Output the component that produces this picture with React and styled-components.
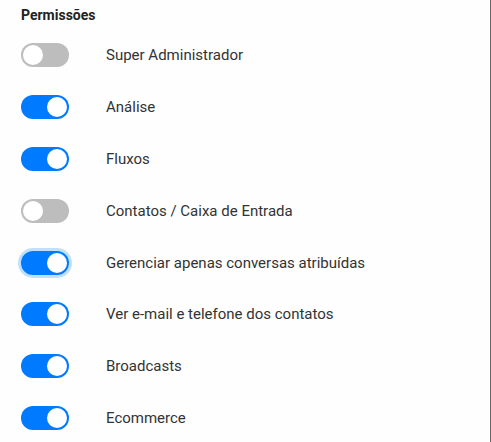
import React from "react";
import styled, { createGlobalStyle } from "styled-components";

const Global = createGlobalStyle`
  html, body { margin: 0; padding: 0; background: #fff; }
  * { box-sizing: border-box; }
`;

const Panel = styled.div`
  width: 491px;
  height: 442px;
  border-right: 1px solid #666;
  background: #fefefe;
  padding: 6px 0 0 21px;
  font-family: Roboto, "Liberation Sans", sans-serif;
  overflow: hidden;
`;

const Title = styled.div`
  font-size: 14px;
  font-weight: 700;
  color: #222;
  line-height: 18px;
  margin-bottom: 5px;
`;

const List = styled.div`
  display: flex;
  flex-direction: column;
`;

const Row = styled.div`
  display: flex;
  align-items: center;
  height: 51.9px;
`;

const Track = styled.span`
  position: relative;
  flex: none;
  width: 48px;
  height: 24px;
  border-radius: 12px;
  background: ${(p) => (p.$on ? "#007bff" : "#bdbdbd")};
  box-shadow: ${(p) => (p.$focus ? "0 0 0 3px #c0e0fa" : "none")};
`;

const Knob = styled.span`
  position: absolute;
  top: 2px;
  left: ${(p) => (p.$on ? "26px" : "2px")};
  width: 20px;
  height: 20px;
  border-radius: 50%;
  background: #fff;
`;

const Label = styled.span`
  margin-left: 37px;
  font-size: 15px;
  color: #333;
`;

const items = [
  ["Super Administrador", false],
  ["Análise", true],
  ["Fluxos", true],
  ["Contatos / Caixa de Entrada", false],
  ["Gerenciar apenas conversas atribuídas", true, true],
  ["Ver e-mail e telefone dos contatos", true],
  ["Broadcasts", true],
  ["Ecommerce", true],
];

export default function App() {
  return (
    <>
      <Global />
      <Panel>
        <Title>Permissões</Title>
        <List>
          {items.map(([label, on, focus]) => (
            <Row key={label}>
              <Track $on={on} $focus={focus}>
                <Knob $on={on} />
              </Track>
              <Label>{label}</Label>
            </Row>
          ))}
        </List>
      </Panel>
    </>
  );
}
